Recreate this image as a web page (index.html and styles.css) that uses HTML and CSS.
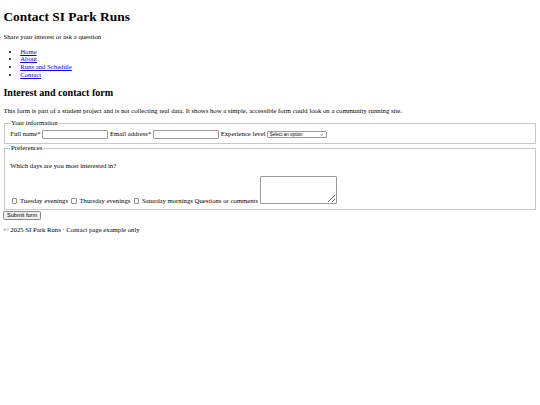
FILE: index.html
```html
<!DOCTYPE html>
<html lang="en">
<head>
<meta charset="utf-8">
<title>Contact SI Park Runs</title>
<link rel="stylesheet" href="styles.css">
</head>
<body>
<header>
  <h1 class="title">Contact SI Park Runs</h1>
  <p class="text">Share your interest or ask a question</p>
  <nav>
    <ul class="nav-list">
      <li><a class="link" href="#">Home</a></li>
      <li><a class="link" href="#">About</a></li>
      <li><a class="link" href="#">Runs and Schedule</a></li>
      <li><a class="link" href="#">Contact</a></li>
    </ul>
  </nav>
</header>
<main>
  <h2 class="subtitle">Interest and contact form</h2>
  <p class="text intro">This form is part of a student project and is not collecting real data. It shows how a simple, accessible form could look on a community running site.</p>
  <form class="form">
    <fieldset class="group">
      <legend class="legend">Your information</legend>
      <label for="name">Full name*</label>
      <input class="field" id="name" type="text">
      <label for="email">Email address*</label>
      <input class="field" id="email" type="email">
      <label for="level">Experience level</label>
      <span class="select-wrap">
        <select class="select" id="level">
          <option>Select an option</option>
        </select>
        <svg class="chevron" viewBox="0 0 10 6" aria-hidden="true"><path d="M1.5 1.2 5 4.6 8.5 1.2" fill="none" stroke="#222" stroke-width="1.6"/></svg>
      </span>
    </fieldset>
    <fieldset class="group group-last">
      <legend class="legend">Preferences</legend>
      <p class="text">Which days are you most interested in?</p>
      <input class="check" id="tue" type="checkbox">
      <label for="tue">Tuesday evenings</label>
      <input class="check" id="thu" type="checkbox">
      <label for="thu">Thursday evenings</label>
      <input class="check" id="sat" type="checkbox">
      <label for="sat">Saturday mornings</label>
      <label for="comments">Questions or comments</label>
      <textarea class="comments" id="comments"></textarea>
    </fieldset>
    <button class="submit" type="submit">Submit form</button>
  </form>
</main>
<footer>
  <p class="text footer-text">&copy; 2025 SI Park Runs &middot; Contact page example only</p>
</footer>
</body>
</html>
```
FILE: styles.css
```css
body {
  margin: 3.4px;
  font-family: "Liberation Serif", "Times New Roman", serif;
  font-size: 6.72px;
  line-height: 7.7px;
  color: #000;
  background: #fff;
}
.title {
  font-size: 13.44px;
  line-height: 15.5px;
  margin: 6px 0 8px;
}
.subtitle {
  font-size: 10.08px;
  line-height: 11.6px;
  margin: 8.4px 0;
}
.text {
  margin: 6.72px 0;
}
.intro {
  margin-bottom: 4.8px;
}
.nav-list {
  margin: 7.2px 0;
  padding-left: 16.8px;
}
.link {
  color: #0000ee;
}
.form {
  margin: 0;
}
.group {
  margin: 0 0.84px;
  padding: 2.8px 5px 4.8px;
  border: 1px solid #c8c8c8;
}
.group-last {
  padding-bottom: 4.2px;
}
.legend {
  padding: 0 0.84px;
}
.field {
  box-sizing: border-box;
  width: 66px;
  height: 8.6px;
  padding: 0 1px;
  margin: 0;
  border: 1px solid #9a9a9a;
  border-radius: 1px;
  font-family: "Liberation Sans", Arial, sans-serif;
  font-size: 5.6px;
  vertical-align: baseline;
}
.select-wrap {
  position: relative;
  display: inline-block;
  vertical-align: baseline;
}
.select {
  appearance: none;
  -webkit-appearance: none;
  box-sizing: border-box;
  display: block;
  width: 60px;
  height: 7px;
  margin: 0;
  padding: 0 0 0 1.4px;
  border: 1px solid #9a9a9a;
  border-radius: 1px;
  background: #fff;
  color: #000;
  font-family: "Liberation Sans", Arial, sans-serif;
  font-size: 4.6px;
  line-height: 5px;
}
.chevron {
  position: absolute;
  right: 4px;
  top: 2.4px;
  width: 3.4px;
  height: 2.2px;
}
.check {
  appearance: none;
  -webkit-appearance: none;
  box-sizing: border-box;
  width: 5.2px;
  height: 5.2px;
  margin: 0 1.3px 0 1.7px;
  border: 1px solid #8f8f8f;
  border-radius: 1px;
  background: #fff;
  vertical-align: -0.5px;
}
.comments {
  box-sizing: border-box;
  width: 77.5px;
  height: 28px;
  margin: 0;
  padding: 1px;
  border: 1px solid #9a9a9a;
  border-radius: 1px;
  font-family: "Liberation Mono", monospace;
  font-size: 5.6px;
  resize: both;
  vertical-align: text-bottom;
}
.submit {
  margin: 1px 0 0;
  padding: 0.6px 2.6px;
  border: 1px solid #8a8a8a;
  border-radius: 1.3px;
  background: #efefef;
  color: #000;
  font-family: "Liberation Sans", Arial, sans-serif;
  font-size: 5.6px;
  line-height: 6.4px;
}
.footer-text {
  margin-top: 6px;
}
```
